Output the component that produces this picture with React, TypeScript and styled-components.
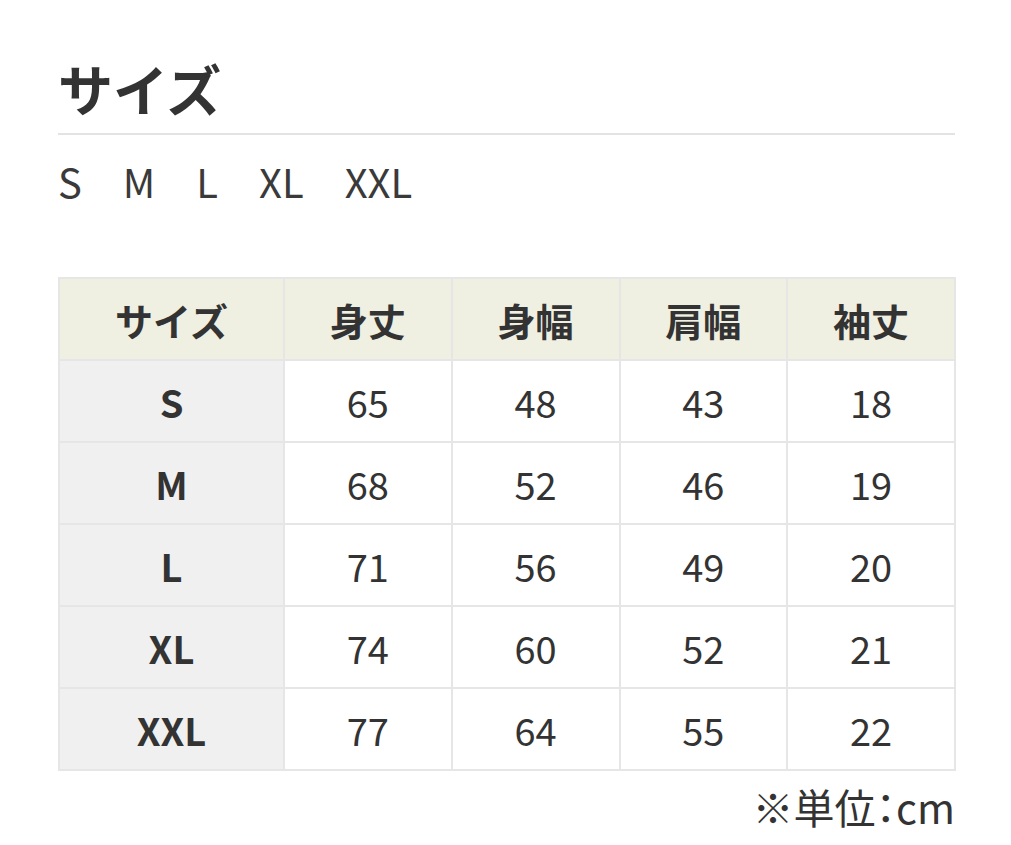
import React from "react";
import styled, { createGlobalStyle } from "styled-components";

const Global = createGlobalStyle`
  html, body { margin: 0; padding: 0; background: #fff; }
  body { font-family: "Noto Sans CJK JP", "Noto Sans", sans-serif; color: #333; }
`;

const Page = styled.div`
  width: 897px;
  padding: 46px 0 0 58px;
`;

const Title = styled.h2`
  margin: 0;
  font-size: 55px;
  font-weight: 700;
  line-height: 82px;
  color: #333;
  border-bottom: 2px solid #e3e3e3;
  padding-bottom: 5px;
`;

const SizeList = styled.div`
  display: flex;
  gap: 41px;
  margin-top: 16px;
  font-size: 40px;
  line-height: 60px;
  color: #3a3a3a;
`;

const Table = styled.table`
  margin-top: 66px;
  width: 898px;
  border-collapse: collapse;
  table-layout: fixed;
`;

const Th = styled.th<{ $first?: boolean }>`
  width: ${(p) => (p.$first ? "223px" : "auto")};
  height: 80px;
  padding: 0;
  background: #efefe2;
  border: 2px solid #e6e6e6;
  font-size: 38px;
  font-weight: 700;
  color: #333;
  text-align: center;
`;

const Td = styled.td<{ $label?: boolean }>`
  height: 80px;
  padding: 0;
  background: ${(p) => (p.$label ? "#f0f0f0" : "#fff")};
  border: 2px solid #e6e6e6;
  font-size: 38px;
  font-weight: ${(p) => (p.$label ? 700 : 400)};
  color: #333;
  text-align: center;
`;

const Note = styled.div`
  text-align: right;
  font-size: 41px;
  line-height: 50px;
  margin-top: 10px;
  color: #333;
`;

const HalfColon = styled.span`
  font-feature-settings: "halt";
`;

const headers = ["サイズ", "身丈", "身幅", "肩幅", "袖丈"];
const rows: [string, number, number, number, number][] = [
  ["S", 65, 48, 43, 18],
  ["M", 68, 52, 46, 19],
  ["L", 71, 56, 49, 20],
  ["XL", 74, 60, 52, 21],
  ["XXL", 77, 64, 55, 22],
];

export default function App() {
  return (
    <Page>
      <Global />
      <Title>サイズ</Title>
      <SizeList>
        {["S", "M", "L", "XL", "XXL"].map((s) => (
          <span key={s}>{s}</span>
        ))}
      </SizeList>
      <Table>
        <thead>
          <tr>
            {headers.map((h, i) => (
              <Th key={h} $first={i === 0}>
                {h}
              </Th>
            ))}
          </tr>
        </thead>
        <tbody>
          {rows.map((r) => (
            <tr key={r[0]}>
              {r.map((c, i) => (
                <Td key={i} $label={i === 0}>
                  {c}
                </Td>
              ))}
            </tr>
          ))}
        </tbody>
      </Table>
      <Note>
        ※単位<HalfColon>：</HalfColon>cm
      </Note>
    </Page>
  );
}
